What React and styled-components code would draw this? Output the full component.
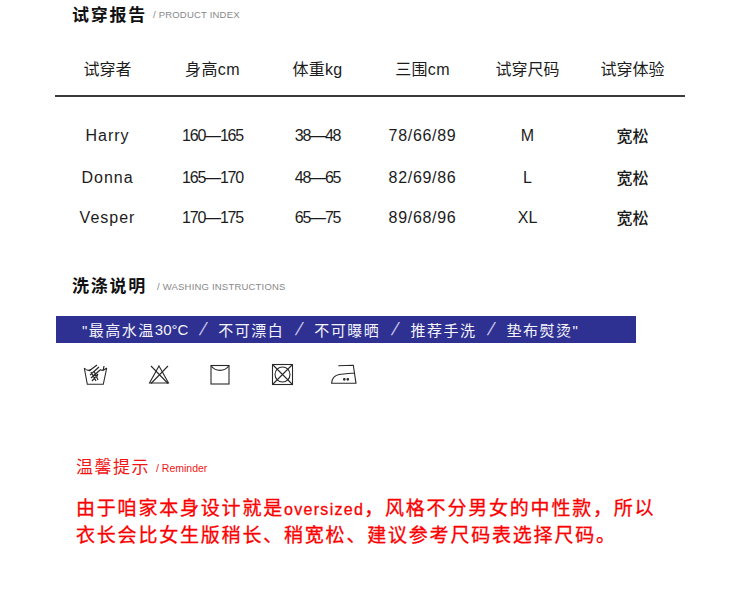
import React from 'react';
import styled, { createGlobalStyle } from 'styled-components';

const GlobalStyle = createGlobalStyle`
  html, body {
    margin: 0;
    padding: 0;
    background: #fff;
  }
  body {
    font-family: "Liberation Sans", "Noto Sans CJK SC", sans-serif;
  }
`;

const Page = styled.div`
  width: 750px;
  height: 598px;
  overflow: hidden;
  display: flex;
  flex-direction: column;
`;

const Heading = styled.div`
  display: flex;
  align-items: center;
  height: 26px;
  padding-left: 72px;
  margin-top: ${({ $top }) => $top}px;
`;

const HeadingText = styled.span`
  font-size: 17px;
  font-weight: 700;
  letter-spacing: 1.75px;
  color: #111;
`;

const HeadingSub = styled.span`
  margin-left: ${({ $gap }) => $gap}px;
  padding-top: ${({ $drop }) => $drop}px;
  font-size: 9.5px;
  letter-spacing: 0.2px;
  color: #888;
  white-space: nowrap;
`;

const Table = styled.div`
  width: 630px;
  margin: 12px 0 0 55px;
`;

const Row = styled.div`
  display: grid;
  grid-template-columns: repeat(6, 105px);
  align-items: center;
  height: ${({ $height }) => $height}px;
`;

const HeadRow = styled(Row)`
  padding-top: 2px;
  border-bottom: 2px solid #3c3c3c;
  margin-bottom: 19px;
`;

const Cell = styled.div`
  text-align: center;
  font-size: 16px;
  font-weight: ${({ $strong }) => ($strong ? 500 : 400)};
  color: #1c1c1c;
  letter-spacing: ${({ $spacing }) => $spacing || 0}px;
  margin-top: ${({ $strong }) => ($strong ? -2 : 0)}px;
`;

const Banner = styled.div`
  width: 580px;
  height: 27px;
  margin: 19px 0 0 56px;
  padding-left: 26px;
  box-sizing: border-box;
  display: flex;
  align-items: center;
  background: #2e3092;
  color: #f4f4fa;
  font-size: 15px;
  letter-spacing: 1.5px;
  white-space: pre;
`;

const Temp = styled.span`
  letter-spacing: 0;
`;

const Slash = styled.span`
  width: 30px;
  text-align: center;
  font-size: 18px;
  font-weight: 300;
  letter-spacing: 0;
  color: #c9cae6;
  transform: skewX(-18deg);
`;

const IconRow = styled.div`
  display: flex;
  margin: 19px 0 0 65px;
`;

const IconSlot = styled.div`
  width: 62px;
  height: 26px;
  display: flex;
  align-items: center;
  justify-content: center;
`;

const Reminder = styled.div`
  display: flex;
  align-items: center;
  height: 26px;
  margin: 64px 0 0 76px;
  color: #f21515;
`;

const ReminderTitle = styled.span`
  font-size: 17px;
  letter-spacing: 1.5px;
`;

const ReminderSub = styled.span`
  margin-left: 6px;
  padding-top: 5px;
  font-size: 10.5px;
`;

const Notice = styled.div`
  margin: 17px 0 0 76px;
  color: #fa0000;
`;

const NoticeLine = styled.div`
  height: 27px;
  line-height: 27px;
  font-size: 19px;
  letter-spacing: 1.8px;
  white-space: nowrap;
  -webkit-text-stroke: 0.3px #fa0000;
`;

const Latin = styled.span`
  font-size: 16px;
  letter-spacing: 1.3px;
`;

const IconSvg = styled.svg.attrs({ viewBox: '0 0 26 24', width: 26, height: 24, fill: 'none' })`
  stroke: #2a2a2a;
  stroke-width: 1.1;
`;

const WashIcon = () => (
  <IconSvg>
    <path d="M1.3 5 L4.3 21.3 H20.3 L23.7 5" />
    <path d="M1.3 5 C4 8 6 8 8 6.5 M17 6.5 C19 8 21 7.5 23.7 5" />
    <path d="M6 8 L14 2 M7 12 L16 4 M8 15 L17 7 M9 18 L15 11 M8 9 L13 18 M11 8 L15 17 M9 12 L15 13 M20 8 L21 3" strokeWidth="1.2" />
  </IconSvg>
);

const NoBleachIcon = () => (
  <IconSvg>
    <path d="M14 3 L23.5 20 H4.5 Z" />
    <path d="M6 3 L23 20.5 M23 3 L6 20.5" />
  </IconSvg>
);

const DryIcon = () => (
  <IconSvg>
    <rect x="4" y="2.5" width="18" height="18.5" />
    <path d="M4 2.5 C8 9 18 9 22 2.5" />
  </IconSvg>
);

const TumbleIcon = () => (
  <IconSvg>
    <rect x="3.5" y="1.5" width="20" height="20" />
    <circle cx="13.5" cy="11.5" r="7.5" />
    <path d="M3.5 1.5 L23.5 21.5 M23.5 1.5 L3.5 21.5" />
  </IconSvg>
);

const IronIcon = () => (
  <IconSvg>
    <path d="M7.3 2.7 C12 2.4 18 2.2 22.3 2.2 L25 20.3 H0.6 C1 15 3 12.5 8 11.5 C13 10.8 19 10.3 23.4 10" />
    <circle cx="13.3" cy="16.3" r="0.8" fill="#2a2a2a" />
    <circle cx="16.8" cy="16.3" r="0.8" fill="#2a2a2a" />
  </IconSvg>
);

const columns = [
  { text: '试穿者' },
  { text: '身高cm', spacing: 0.4 },
  { text: '体重kg', spacing: 0.3 },
  { text: '三围cm', spacing: 0.3 },
  { text: '试穿尺码' },
  { text: '试穿体验' },
];

// 每欄字距不同,對齊原圖寬度
const cellSpacing = [1, -1.2, -1.2, 0.7, 0, 0];

const rows = [
  { height: 40, cells: ['Harry', '160—165', '38—48', '78/66/89', 'M', '宽松'] },
  { height: 44, cells: ['Donna', '165—170', '48—65', '82/69/86', 'L', '宽松'] },
  { height: 36, cells: ['Vesper', '170—175', '65—75', '89/68/96', 'XL', '宽松'] },
];

const careItems = ['不可漂白', '不可曝晒', '推荐手洗'];

const icons = [WashIcon, NoBleachIcon, DryIcon, TumbleIcon, IronIcon];

const App = () => (
  <Page>
    <GlobalStyle />

    <Heading $top={0}>
      <HeadingText>试穿报告</HeadingText>
      <HeadingSub $gap={6} $drop={2}>/ PRODUCT INDEX</HeadingSub>
    </Heading>

    <Table>
      <HeadRow $height={55}>
        {columns.map((item) => <Cell key={item.text} $spacing={item.spacing}>{item.text}</Cell>)}
      </HeadRow>
      {rows.map((row) => (
        <Row key={row.cells[0]} $height={row.height}>
          {row.cells.map((item, i) => (
            <Cell key={i} $spacing={cellSpacing[i]} $strong={i === 5}>{item}</Cell>
          ))}
        </Row>
      ))}
    </Table>

    <Heading $top={35}>
      <HeadingText>洗涤说明</HeadingText>
      <HeadingSub $gap={10} $drop={4}>/ WASHING INSTRUCTIONS</HeadingSub>
    </Heading>

    <Banner>
      "最高水温<Temp>30°C</Temp>
      <Slash>/</Slash>
      {careItems.map((item) => (
        <React.Fragment key={item}>
          {item}
          <Slash>/</Slash>
        </React.Fragment>
      ))}
      垫布熨烫"
    </Banner>

    <IconRow>
      {icons.map((Icon, i) => <IconSlot key={i}><Icon /></IconSlot>)}
    </IconRow>

    <Reminder>
      <ReminderTitle>温馨提示</ReminderTitle>
      <ReminderSub>/ Reminder</ReminderSub>
    </Reminder>

    <Notice>
      <NoticeLine>由于咱家本身设计就是<Latin>oversized</Latin>，风格不分男女的中性款，所以</NoticeLine>
      <NoticeLine>衣长会比女生版稍长、稍宽松、建议参考尺码表选择尺码。</NoticeLine>
    </Notice>
  </Page>
);

export default App;
